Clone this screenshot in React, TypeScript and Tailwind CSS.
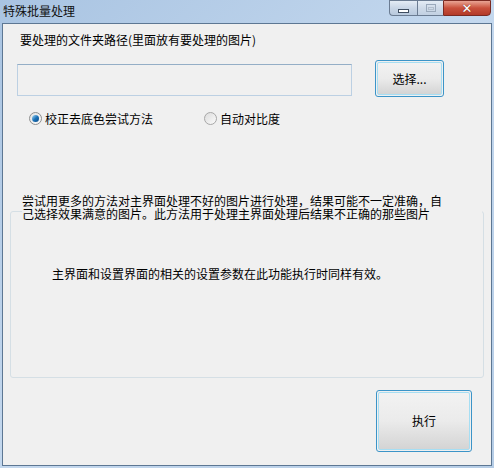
export default function App() {
  const font = { fontFamily: '"Noto Sans CJK SC", "Noto Sans", sans-serif' }

  return (
    <div
      className="w-[494px] h-[468px] flex flex-col bg-gradient-to-br from-[#a9c4e2] via-[#c4d8ee] to-[#b6cde6] overflow-hidden text-black"
      style={font}
    >
      {/* title bar */}
      <div className="h-[23px] flex items-start">
        <div className="pl-[3px] pt-[3px] text-[12px] leading-[15px] text-[#111]">特殊批量处理</div>
        <div className="ml-auto mr-[3px] flex h-[16px]">
          <div className="w-[28px] h-full border border-[#6b7c92] border-r-0 rounded-bl-[4px] bg-gradient-to-b from-[#e4ecf5] via-[#c9d6e6] to-[#b8c9dd] flex items-center justify-center">
            <div className="w-[11px] h-[4px] mt-[5px] border border-[#3e4d60] bg-white" />
          </div>
          <div className="w-[26px] h-full border border-[#6b7c92] border-r-0 bg-gradient-to-b from-[#e4ecf5] via-[#cfdbe9] to-[#c1d0e2] flex items-center justify-center">
            <div className="w-[10px] h-[8px] border border-[#9aa9bb] flex items-center justify-center">
              <div className="w-[6px] h-[3px] border border-[#b3bfcd]" />
            </div>
          </div>
          <div className="w-[48px] h-full border border-[#7a2a22] rounded-br-[4px] bg-gradient-to-b from-[#e8a494] via-[#c9503c] to-[#b33a28] flex items-center justify-center">
            <span className="text-white text-[13px] leading-none font-bold" style={{ fontFamily: '"DejaVu Sans", sans-serif', textShadow: '0 0 1px #5a1a10' }}>
              ✕
            </span>
          </div>
        </div>
      </div>

      {/* client area */}
      <div className="ml-[2px] mr-[2px] mb-[2px] flex-1 border border-[#5d7793] bg-[#f0f0f0] flex flex-col text-[12px]">
        <div className="ml-[17px] mt-[8px] leading-[15px]">要处理的文件夹路径(里面放有要处理的图片)</div>

        <div className="flex items-start mt-[13px]">
          <div className="ml-[14px] mt-[4px] w-[335px] h-[32px] bg-[#f0f0f0] border border-[#bcd0e3] border-t-[#94aec6]" />
          <button className="ml-[23px] w-[69px] h-[37px] rounded-[3px] border border-[#3c94c8] p-[1px]">
            <div className="w-full h-full rounded-[2px] border border-[#a6def3] bg-gradient-to-b from-[#f2f2f2] via-[#ebebeb] to-[#d4d4d4] flex items-center justify-center leading-none">
              选择...
            </div>
          </button>
        </div>

        <div className="flex items-center mt-[14px] h-[15px]">
          <div className="ml-[26px] w-[13px] h-[13px] rounded-full border border-[#8e8f8f] bg-gradient-to-br from-[#e3e3e3] to-[#fafafa] flex items-center justify-center">
            <div className="w-[7px] h-[7px] rounded-full bg-gradient-to-br from-[#9fdcf6] via-[#1c73b8] to-[#0a4a87]" />
          </div>
          <span className="ml-[3px] leading-[15px]">校正去底色尝试方法</span>
          <div className="ml-[51px] w-[13px] h-[13px] rounded-full border border-[#a7a7a7] bg-gradient-to-br from-[#dcdcdc] to-[#fbfbfb]" />
          <span className="ml-[3px] leading-[15px]">自动对比度</span>
        </div>

        <div className="relative mt-[85px] mx-[7px] h-[167px] rounded-[3px] border border-[#d5dfe5]">
          <div className="absolute left-[11px] top-[-18px] w-[460px] bg-[#f0f0f0] leading-[13px]">
            尝试用更多的方法对主界面处理不好的图片进行处理，结果可能不一定准确，自
            <br />
            己选择效果满意的图片。此方法用于处理主界面处理后结果不正确的那些图片
          </div>
          <div className="absolute left-[41px] top-[54px] leading-[15px]">
            主界面和设置界面的相关的设置参数在此功能执行时同样有效。
          </div>
        </div>

        <div className="flex mt-[12px]">
          <button className="ml-auto mr-[19px] w-[96px] h-[62px] rounded-[3px] border border-[#3c94c8] p-[1px]">
            <div className="w-full h-full rounded-[2px] border border-[#a6def3] bg-gradient-to-b from-[#f2f2f2] via-[#ebebeb] to-[#d4d4d4] flex items-center justify-center leading-none">
              执行
            </div>
          </button>
        </div>
      </div>
    </div>
  )
}
